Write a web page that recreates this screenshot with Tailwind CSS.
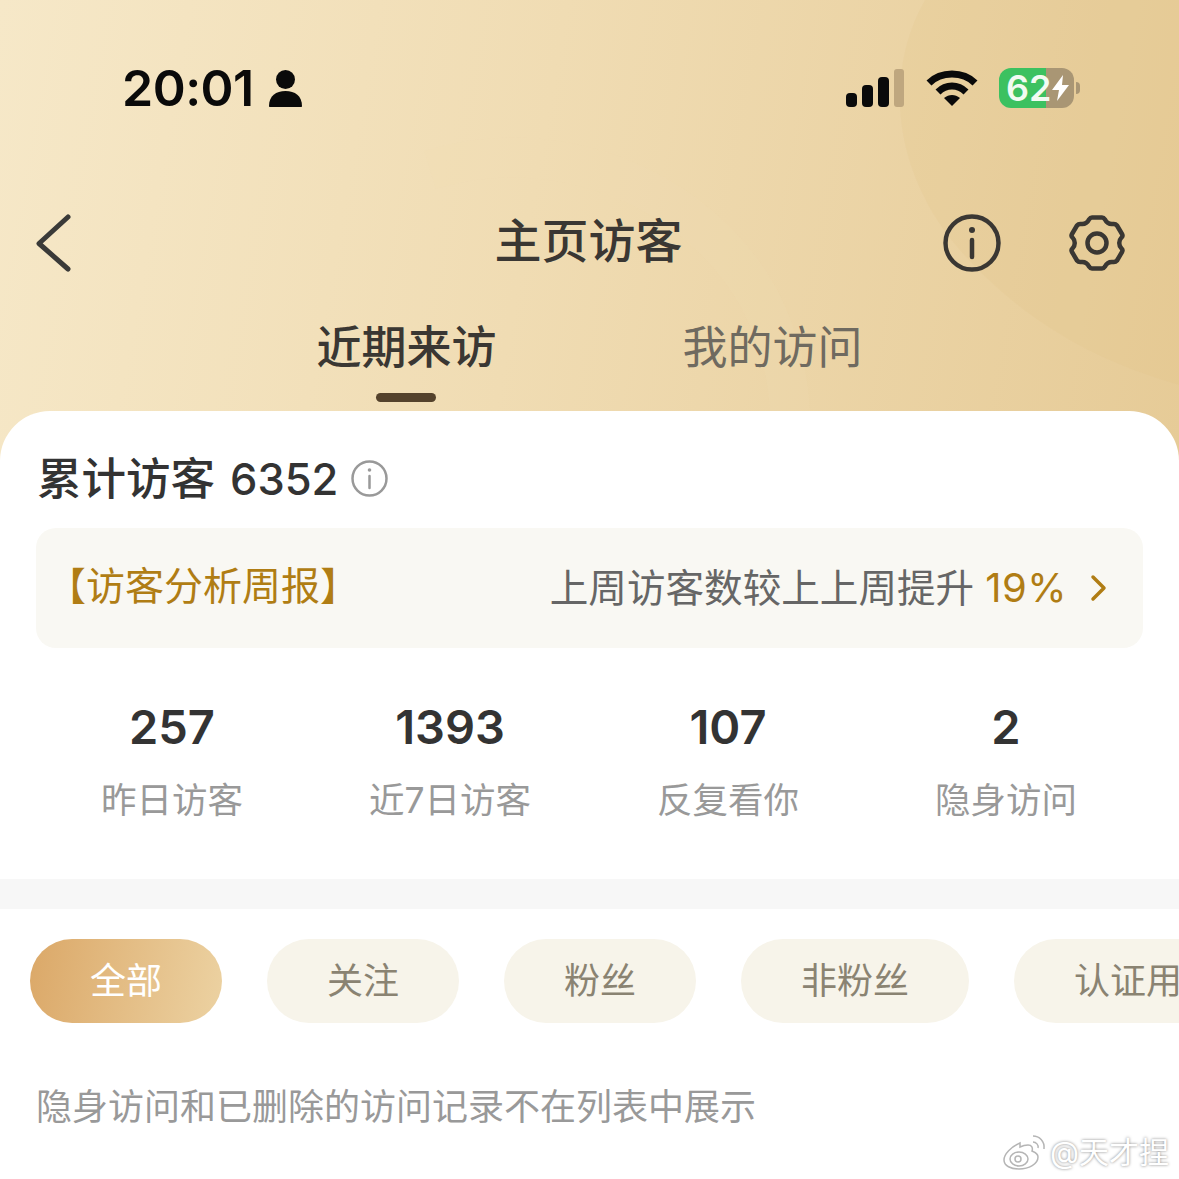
<!DOCTYPE html>
<html><head><meta charset="utf-8"><script src="https://cdn.jsdelivr.net/npm/@tailwindcss/browser@4"></script></head>
<body class="m-0">
<div class="relative w-[1179px] h-[1179px] overflow-hidden bg-white font-['Inter','Noto_Sans_CJK_SC',sans-serif] text-[#333333]">
  <div class="relative h-[460px] -mb-[49px] bg-[linear-gradient(100deg,#f6e8c8_0%,#f0dcb3_45%,#e6cb97_100%)] overflow-hidden">
    <svg class="absolute inset-0" width="1179" height="460" viewBox="0 0 1179 460" fill="none">
      <path d="M925 0C885 70 890 170 960 250C1030 330 1110 365 1179 385V0Z" fill="#dfbf85" fill-opacity="0.16"/>
      <path d="M430 170C560 130 700 190 760 300C780 340 790 380 790 420" stroke="#f3e0b8" stroke-opacity="0.15" stroke-width="40"/>
    </svg>
    <div class="relative h-[176px] pl-[122px] pr-[99px] pt-[58px] flex items-start justify-between">
      <div class="flex items-center gap-[14px] h-[60px]">
        <span class="text-[50px] leading-[60px] font-semibold text-[#0a0a0a] tracking-[-0.5px]">20:01</span>
        <svg width="35" height="38" viewBox="0 0 35 38" fill="#0a0a0a"><circle cx="17.5" cy="10.5" r="9.5"/><path d="M1 37c0-10 7-15 16.500-15S34 27 34 37c0 .6-.5 1-1 1H2c-.6 0-1-.4-1-1z"/></svg>
      </div>
      <div class="flex items-center h-[60px]">
        <svg class="mr-[21px]" width="60" height="38" viewBox="0 0 60 38"><rect x="1" y="24" width="11" height="14" rx="4" fill="#0a0a0a"/><rect x="17" y="16" width="11" height="22" rx="4" fill="#0a0a0a"/><rect x="33" y="8" width="11" height="30" rx="4" fill="#0a0a0a"/><rect x="49" y="0" width="10" height="38" rx="3" fill="#bfa77f"/></svg>
        <svg class="mr-[21px]" width="52" height="38" viewBox="0 0 52 38" fill="none" stroke="#0a0a0a" stroke-width="7"><path d="M3 14C15 2 37 2 49 14"/><path d="M12 23C20 15 32 15 40 23"/><path d="M26 37l-8-8c5-4 11-4 16 0z" fill="#0a0a0a" stroke="none"/></svg>
        <div class="relative w-[75px] h-[40px] rounded-[12px] bg-[linear-gradient(90deg,#3cc160_47px,#a99674_47px)] mr-[2px]">
          <span class="absolute left-[7px] top-0 text-[36px] leading-[40px] font-semibold text-[#f2fbf2]">62</span>
          <svg class="absolute left-[52px] top-[7px]" width="19" height="26" viewBox="0 0 19 26" fill="#ffffff"><path d="M12 0L1 15h7l-2 11 12-16h-7z"/></svg>
        </div>
        <div class="w-[4px] h-[12px] rounded-r-[4px] bg-[#a99674]"></div>
      </div>
    </div>
    <div class="relative h-[132px] pl-[34px] pr-[52px] flex items-start justify-between">
      <svg class="mt-[38px]" width="38" height="58" viewBox="0 0 38 58" fill="none" stroke="#3a3a38" stroke-width="5" stroke-linecap="round" stroke-linejoin="round"><path d="M34 3L5 29.500 34 55"/></svg>
      <div class="absolute left-0 right-[2px] top-[35px] text-center text-[47px] leading-[60px] font-medium text-[#3a3733]">主页访客</div>
      <div class="flex items-center gap-[65px] mt-[37px]">
        <svg width="60" height="60" viewBox="0 0 60 60" fill="none" stroke="#3a3733" stroke-width="4.500" stroke-linecap="round"><circle cx="30" cy="30" r="26.500"/><path d="M30 27v17"/><circle cx="30" cy="17" r="3" fill="#3a3733" stroke="none"/></svg>
        <svg width="60" height="60" viewBox="0 0 60 60" fill="none" stroke="#3a3733" stroke-width="4.500" stroke-linejoin="round"><circle cx="30" cy="30" r="9.500"/><path d="M22 6.500c1-1.500 2-2 3-2h10c1 0 2 .5 3 2 1.500 3 4 5 8 4.500 2-.3 3 .3 4 1.500l5 8.500c.6 1 .6 2.500-.5 3.500-3 3-3 8 0 11 1.100 1 1.100 2.500.5 3.500l-5 8.500c-1 1.200-2 1.800-4 1.500-4-.5-6.500 1.500-8 4.500-1 1.500-2 2-3 2H25c-1 0-2-.5-3-2-1.500-3-4-5-8-4.500-2 .3-3-.3-4-1.500l-5-8.500c-.6-1-.6-2.500.5-3.500 3-3 3-8 0-11-1.100-1-1.100-2.500-.5-3.500l5-8.500c1-1.200 2-1.800 4-1.500 4 .5 6.500-1.500 8-4.500z"/></svg>
      </div>
    </div>
    <div class="relative flex justify-center gap-[186px] text-[45px] leading-[60px]">
      <div class="relative h-[103px] font-medium text-[#3a3733] pt-[10px]">近期来访<div class="absolute left-[60px] top-[85px] w-[60px] h-[9px] rounded-full bg-[#54422c]"></div></div>
      <div class="h-[103px] text-[#6f6a60] pt-[10px]">我的访问</div>
    </div>
  </div>

  <div class="relative bg-white rounded-t-[50px] h-[768px] flex flex-col">
    <div class="pl-[37px] pt-[38px] h-[117px] flex items-start">
      <span class="text-[44.5px] leading-[60px] font-medium text-[#333333]">累计访客</span>
      <span class="text-[43.5px] leading-[60px] font-medium text-[#333333] ml-[15px]">6352</span>
      <svg class="ml-[13px] mt-[11px]" width="37" height="37" viewBox="0 0 37 37" fill="none" stroke="#999999" stroke-width="2.500" stroke-linecap="round"><circle cx="18.500" cy="18.500" r="17"/><path d="M18.500 16v12"/><circle cx="18.500" cy="10" r="1.800" fill="#999999" stroke="none"/></svg>
    </div>
    <div class="mx-[36px] h-[120px] rounded-[20px] bg-[#f9f8f3] flex items-center justify-between pl-[11px] pr-[36px]">
      <span class="text-[39px] leading-[50px] -mt-[4px] text-[#b07d14]">【访客分析周报】</span>
      <div class="flex items-center">
        <span class="text-[38.6px] leading-[50px] text-[#666666]">上周访客数较上上周提升</span>
        <span class="text-[40px] leading-[50px] text-[#b07d14] ml-[11px] font-normal tracking-[0.5px]">19%</span>
        <svg class="ml-[23px]" width="17" height="28" viewBox="0 0 17 28" fill="none" stroke="#b07d14" stroke-width="3.500" stroke-linecap="round" stroke-linejoin="round"><path d="M3 3l11 11L3 25"/></svg>
      </div>
    </div>
    <div class="grid grid-cols-[278px_278px_278px_278px] pl-[33px] pt-[49px] h-[231px]">
      <div class="text-center"><div class="text-[47px] leading-[60px] font-semibold text-[#333333]">257</div><div class="mt-[21px] text-[35.5px] leading-[46px] text-[#999999]">昨日访客</div></div>
      <div class="text-center"><div class="text-[47px] leading-[60px] font-semibold text-[#333333]">1393</div><div class="mt-[21px] text-[35.5px] leading-[46px] text-[#999999]">近7日访客</div></div>
      <div class="text-center"><div class="text-[47px] leading-[60px] font-semibold text-[#333333]">107</div><div class="mt-[21px] text-[35.5px] leading-[46px] text-[#999999]">反复看你</div></div>
      <div class="text-center"><div class="text-[47px] leading-[60px] font-semibold text-[#333333]">2</div><div class="mt-[21px] text-[35.5px] leading-[46px] text-[#999999]">隐身访问</div></div>
    </div>
    <div class="h-[30px] bg-[#f7f7f7]"></div>
    <div class="flex pl-[30px] pt-[30px] whitespace-nowrap text-[36px] leading-[84px]">
      <div class="w-[192px] h-[84px] rounded-full bg-[linear-gradient(100deg,#dba868,#ecd2a2)] text-white text-center shrink-0">全部</div>
      <div class="ml-[45px] w-[192px] h-[84px] rounded-full bg-[#f7f4ea] text-[#8a8372] text-center shrink-0">关注</div>
      <div class="ml-[45px] w-[192px] h-[84px] rounded-full bg-[#f7f4ea] text-[#8a8372] text-center shrink-0">粉丝</div>
      <div class="ml-[45px] w-[228px] h-[84px] rounded-full bg-[#f7f4ea] text-[#8a8372] text-center shrink-0">非粉丝</div>
      <div class="ml-[45px] w-[264px] h-[84px] rounded-full bg-[#f7f4ea] text-[#8a8372] text-center shrink-0">认证用户</div>
    </div>
    <div class="pl-[36px] mt-[59px] text-[36px] leading-[50px] text-[#999999] whitespace-nowrap">隐身访问和已删除的访问记录不在列表中展示</div>
  </div>

  <div class="absolute left-[1003px] top-[1132px] flex items-center text-[30px] leading-[40px] text-white [text-shadow:0_0_3px_rgba(0,0,0,0.5)]">
    <svg width="44" height="36" viewBox="0 0 44 36" fill="#ffffff" stroke="#b5b5b5" stroke-width="1.500"><path d="M17 9C8 13 1 20 1 26c0 6 7 9 15 9 10 0 19-5 19-12 0-4-4-5-6-6 1-3 0-6-4-6-3 0-6 1-8 2z"/><ellipse cx="16" cy="25" rx="9" ry="7" fill="none"/><circle cx="15" cy="25" r="3" fill="none"/><path d="M30 2c6 0 12 5 11 13M30 8c3 0 6 3 5 6" fill="none"/></svg>
    <span class="ml-[3px]">@天才捏</span>
  </div>
</div>
</body></html>
